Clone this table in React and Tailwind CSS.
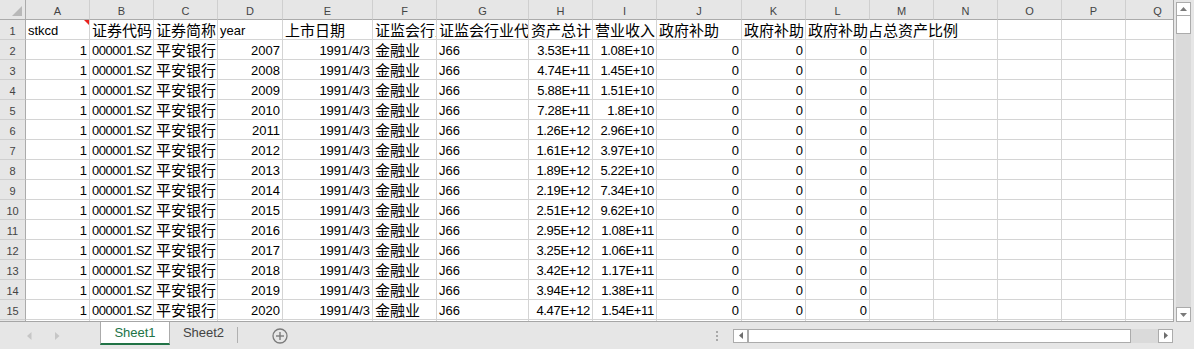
import React from "react";

const COLS = ["A","B","C","D","E","F","G","H","I","J","K","L","M","N","O","P","Q"];

const DATA = [
  [2007, "3.53E+11", "1.08E+10"],
  [2008, "4.74E+11", "1.45E+10"],
  [2009, "5.88E+11", "1.51E+10"],
  [2010, "7.28E+11", "1.8E+10"],
  [2011, "1.26E+12", "2.96E+10"],
  [2012, "1.61E+12", "3.97E+10"],
  [2013, "1.89E+12", "5.22E+10"],
  [2014, "2.19E+12", "7.34E+10"],
  [2015, "2.51E+12", "9.62E+10"],
  [2016, "2.95E+12", "1.08E+11"],
  [2017, "3.25E+12", "1.06E+11"],
  [2018, "3.42E+12", "1.17E+11"],
  [2019, "3.94E+12", "1.38E+11"],
  [2020, "4.47E+12", "1.54E+11"],
];

const CELL_R =
  "h-[20px] border-r border-b border-[#d4d4d4] bg-white overflow-hidden whitespace-nowrap pl-[2px] pr-[2px] text-right text-[13px] leading-[21px] text-black";
const CELL_L =
  "h-[20px] border-r border-b border-[#d4d4d4] bg-white overflow-hidden whitespace-nowrap pl-[2px] pr-0 text-left text-[13px] leading-[21px] text-black";
const CELL_C =
  "h-[20px] border-r border-b border-[#d4d4d4] bg-white overflow-hidden whitespace-nowrap pl-[2px] pr-0 text-left text-[15px] leading-[20px] text-black font-['Noto_Sans_CJK_SC',sans-serif]";
const CELL_E = "h-[20px] border-r border-b border-[#d4d4d4] bg-white";

function Cell({ kind, children, className = "" }) {
  const base =
    kind === "r" ? CELL_R : kind === "l" ? CELL_L : kind === "c" ? CELL_C : CELL_E;
  return <div className={base + " " + className}>{children}</div>;
}

function RowHead({ n }) {
  return (
    <div className="h-[20px] bg-[#e6e6e6] border-r border-r-[#ababab] border-b border-b-[#cfcfcf] text-[11px] leading-[22px] text-center text-[#444] overflow-hidden">
      {n}
    </div>
  );
}

function Grid() {
  return (
    <div className="grid w-max grid-cols-[26px_64px_64px_64px_65px_90px_64px_92px_64px_64px_85px_64px_64px_64px_64px_64px_64px_64px]">
      {/* header row */}
      <div className="h-[20px] bg-[#e6e6e6] border-r border-r-[#ababab] border-b border-b-[#ababab] relative">
        <svg width="25" height="19" className="block">
          <polygon points="12,16 22,16 22,6" fill="#b8b8b8" />
        </svg>
      </div>
      {COLS.map((c) => (
        <div
          key={c}
          className="h-[20px] bg-[#e6e6e6] border-r border-r-[#cfcfcf] border-b border-b-[#ababab] text-[11px] leading-[22px] text-center text-[#444] overflow-hidden"
        >
          {c}
        </div>
      ))}

      {/* row 1 */}
      <RowHead n={1} />
      <Cell kind="l" className="relative">
        stkcd
        <svg width="5" height="5" className="absolute top-0 right-0">
          <polygon points="0,0 5,0 5,5" fill="#e8231f" />
        </svg>
      </Cell>
      <Cell kind="c">证券代码</Cell>
      <Cell kind="c">证券简称</Cell>
      <Cell kind="l">year</Cell>
      <Cell kind="c">上市日期</Cell>
      <Cell kind="c">证监会行业名称</Cell>
      <Cell kind="c">证监会行业代码</Cell>
      <Cell kind="c">资产总计</Cell>
      <Cell kind="c">营业收入</Cell>
      <Cell kind="c">政府补助</Cell>
      <Cell kind="c">政府补助</Cell>
      <Cell kind="c" className="col-span-3">政府补助占总资产比例</Cell>
      <Cell kind="e" />
      <Cell kind="e" />
      <Cell kind="e" />

      {DATA.map(([year, assets, rev], i) => (
        <React.Fragment key={year}>
          <RowHead n={i + 2} />
          <Cell kind="r">1</Cell>
          <Cell kind="l" className="tracking-[-0.45px]">000001.SZ</Cell>
          <Cell kind="c">平安银行</Cell>
          <Cell kind="r">{year}</Cell>
          <Cell kind="r">1991/4/3</Cell>
          <Cell kind="c">金融业</Cell>
          <Cell kind="l">J66</Cell>
          <Cell kind="r" className="tracking-[-0.3px]">{assets}</Cell>
          <Cell kind="r" className="tracking-[-0.3px]">{rev}</Cell>
          <Cell kind="r">0</Cell>
          <Cell kind="r">0</Cell>
          <Cell kind="r">0</Cell>
          <Cell kind="e" />
          <Cell kind="e" />
          <Cell kind="e" />
          <Cell kind="e" />
          <Cell kind="e" />
        </React.Fragment>
      ))}

      {/* partially visible row 16 (only its top edge shows) */}
      <RowHead n="" />
      {COLS.map((c) => (
        <Cell key={"r16" + c} kind="e" />
      ))}
    </div>
  );
}

function VScroll() {
  return (
    <div className="w-[20px] h-full flex flex-col pl-[2px] pt-[2px]">
      <div className="w-[15px] h-[14px] bg-white border border-[#ababab] flex items-center justify-center">
        <svg width="7" height="4">
          <polygon points="0,4 7,4 3.5,0" fill="#7a7a7a" />
        </svg>
      </div>
      <div className="w-[15px] h-[18px] bg-white border border-[#ababab] border-t-0" />
      <div className="w-[15px] flex-1 bg-[#dadada]" />
      <div className="w-[15px] h-[15px] bg-white border border-[#ababab] flex items-center justify-center">
        <svg width="7" height="4">
          <polygon points="0,0 7,0 3.5,4" fill="#7a7a7a" />
        </svg>
      </div>
    </div>
  );
}

function BottomBar() {
  return (
    <div className="h-[27px] flex items-center font-['Liberation_Sans',sans-serif]">
      <div className="w-[100px] h-full flex items-center pl-[27px]">
        <svg width="5" height="8">
          <polygon points="4.5,0 4.5,8 0,4" fill="#c6c6c6" />
        </svg>
        <svg width="5" height="8" className="ml-[23px]">
          <polygon points="0,0 0,8 4.5,4" fill="#c6c6c6" />
        </svg>
      </div>
      <div className="self-start w-[70px] h-[23px] bg-white border-l border-r border-[#ababab] border-b-2 border-b-[#217346] text-[13px] leading-[21px] text-center text-[#217346]">
        Sheet1
      </div>
      <div className="self-start w-[67px] h-[23px] text-[13px] leading-[21px] text-center text-[#444]">
        Sheet2
      </div>
      <div className="self-start mt-[5px] w-px h-[16px] bg-[#b0b0b0]" />
      <svg width="16" height="16" className="ml-[34px]">
        <circle cx="8" cy="8" r="7" fill="none" stroke="#7a7a7a" strokeWidth="1.3" />
        <line x1="8" y1="4" x2="8" y2="12" stroke="#7a7a7a" strokeWidth="1.4" />
        <line x1="4" y1="8" x2="12" y2="8" stroke="#7a7a7a" strokeWidth="1.4" />
      </svg>
      <div className="ml-[428px] flex flex-col gap-[2px]">
        <div className="w-[2px] h-[2px] bg-[#a8a8a8]" />
        <div className="w-[2px] h-[2px] bg-[#a8a8a8]" />
        <div className="w-[2px] h-[2px] bg-[#a8a8a8]" />
      </div>
      <div className="ml-[15px] w-[440px] h-[14px] flex">
        <div className="w-[15px] h-full bg-white border border-[#ababab] flex items-center justify-center">
          <svg width="4" height="7">
            <polygon points="4,0 4,7 0,3.5" fill="#6e6e6e" />
          </svg>
        </div>
        <div className="w-[383px] h-full bg-white border border-[#ababab]" />
        <div className="flex-1 h-full bg-[#dadada]" />
        <div className="w-[15px] h-full bg-white border border-[#ababab] flex items-center justify-center">
          <svg width="4" height="7">
            <polygon points="0,0 0,7 4,3.5" fill="#6e6e6e" />
          </svg>
        </div>
      </div>
    </div>
  );
}

export default function App() {
  return (
    <div className="w-[1194px] h-[349px] bg-[#e6e6e6] flex flex-col overflow-hidden font-['Liberation_Sans',sans-serif]">
      <div className="flex h-[322px]">
        <div className="w-[1174px] h-full border-r border-b border-[#a6a6a6] bg-white overflow-hidden">
          <Grid />
        </div>
        <VScroll />
      </div>
      <BottomBar />
    </div>
  );
}
